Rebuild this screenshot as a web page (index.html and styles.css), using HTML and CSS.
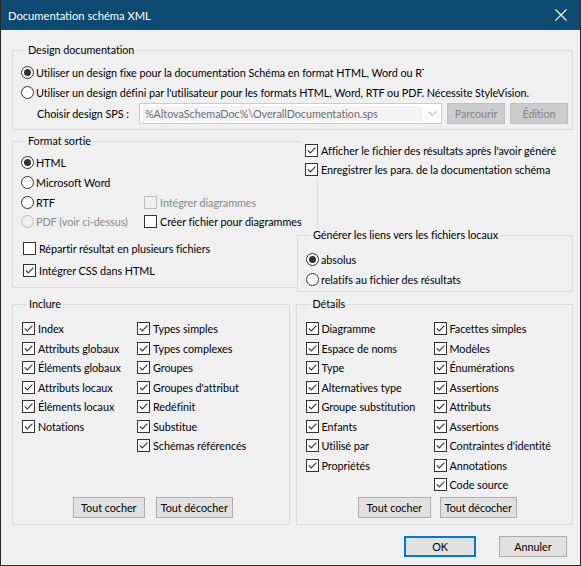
FILE: index.html
```html
<!DOCTYPE html>
<html lang="fr">
<head>
<meta charset="utf-8">
<title>Documentation schéma XML</title>
<link rel="stylesheet" href="styles.css">
</head>
<body>
<div class="window">
  <div class="titlebar">
    <span class="title">Documentation schéma XML</span>
    <svg class="close" width="12" height="12" viewBox="0 0 12 12"><path d="M0.5 0.5 L11.5 11.5 M11.5 0.5 L0.5 11.5" stroke="#fff" stroke-width="1.1" fill="none"/></svg>
  </div>
  <div class="content">
    <fieldset class="group g-design">
      <legend>Design documentation</legend>
      <div class="opt clip"><span class="rb on"></span><span class="lbl">Utiliser un design fixe pour la documentation Schéma en format HTML, Word ou RTF</span></div>
      <div class="opt"><span class="rb"></span><span class="lbl">Utiliser un design défini par l'utilisateur pour les formats HTML, Word, RTF ou PDF. Nécessite StyleVision.</span></div>
      <div class="spsrow">
        <span class="spslabel">Choisir design SPS :</span>
        <div class="combo"><span class="val">%AltovaSchemaDoc%\OverallDocumentation.sps</span><svg class="arrow" width="9" height="5" viewBox="0 0 9 5"><path d="M0.5 0.5 L4.5 4.5 L8.5 0.5" stroke="#a8a8a8" fill="none"/></svg></div>
        <span class="btn disabled b-parc">Parcourir</span>
        <span class="btn disabled b-edit">Édition</span>
      </div>
    </fieldset>

    <div class="middle">
      <fieldset class="group g-format">
        <legend>Format sortie</legend>
        <div class="frow r1"><span class="c1"><span class="rb on"></span>HTML</span></div>
        <div class="frow r2"><span class="c1"><span class="rb"></span>Microsoft Word</span></div>
        <div class="frow r3"><span class="c1"><span class="rb"></span>RTF</span><span class="c2 dis"><span class="cb"></span>Intégrer diagrammes</span></div>
        <div class="frow r4"><span class="c1 dis"><span class="rb"></span>PDF (voir ci-dessus)</span><span class="c2"><span class="cb"></span>Créer fichier pour diagrammes</span></div>
        <div class="frow r5 indent"><span class="cb"></span>Répartir résultat en plusieurs fichiers</div>
        <div class="frow r6 indent"><span class="cb"><svg width="11" height="11" viewBox="0 0 11 11"><path d="M1.8 5.3 L4.3 7.9 L9.4 2.6" stroke="#333" stroke-width="1.1" fill="none"/></svg></span>Intégrer CSS dans HTML</div>
      </fieldset>

      <div class="rightcol">
        <div class="topchecks">
          <div class="opt r19"><span class="cb"><svg width="11" height="11" viewBox="0 0 11 11"><path d="M1.8 5.3 L4.3 7.9 L9.4 2.6" stroke="#333" stroke-width="1.1" fill="none"/></svg></span>Afficher le fichier des résultats après l'avoir généré</div>
          <div class="opt r19"><span class="cb"><svg width="11" height="11" viewBox="0 0 11 11"><path d="M1.8 5.3 L4.3 7.9 L9.4 2.6" stroke="#333" stroke-width="1.1" fill="none"/></svg></span>Enregistrer les para. de la documentation schéma</div>
        </div>
        <div class="genwrap">
          <fieldset class="group g-gen">
            <legend>Générer les liens vers les fichiers locaux</legend>
            <div class="opt"><span class="rb on"></span>absolus</div>
            <div class="opt"><span class="rb"></span>relatifs au fichier des résultats</div>
          </fieldset>
        </div>
      </div>
    </div>

    <div class="lower">
      <fieldset class="group g-incl">
        <legend>Inclure</legend>
        <div class="checks">
          <div class="col col-a">
            <div class="crow"><span class="cb"><svg width="11" height="11" viewBox="0 0 11 11"><path d="M1.8 5.3 L4.3 7.9 L9.4 2.6" stroke="#333" stroke-width="1.1" fill="none"/></svg></span>Index</div>
            <div class="crow"><span class="cb"><svg width="11" height="11" viewBox="0 0 11 11"><path d="M1.8 5.3 L4.3 7.9 L9.4 2.6" stroke="#333" stroke-width="1.1" fill="none"/></svg></span>Attributs globaux</div>
            <div class="crow"><span class="cb"><svg width="11" height="11" viewBox="0 0 11 11"><path d="M1.8 5.3 L4.3 7.9 L9.4 2.6" stroke="#333" stroke-width="1.1" fill="none"/></svg></span>Éléments globaux</div>
            <div class="crow"><span class="cb"><svg width="11" height="11" viewBox="0 0 11 11"><path d="M1.8 5.3 L4.3 7.9 L9.4 2.6" stroke="#333" stroke-width="1.1" fill="none"/></svg></span>Attributs locaux</div>
            <div class="crow"><span class="cb"><svg width="11" height="11" viewBox="0 0 11 11"><path d="M1.8 5.3 L4.3 7.9 L9.4 2.6" stroke="#333" stroke-width="1.1" fill="none"/></svg></span>Éléments locaux</div>
            <div class="crow"><span class="cb"><svg width="11" height="11" viewBox="0 0 11 11"><path d="M1.8 5.3 L4.3 7.9 L9.4 2.6" stroke="#333" stroke-width="1.1" fill="none"/></svg></span>Notations</div>
          </div>
          <div class="col">
            <div class="crow"><span class="cb"><svg width="11" height="11" viewBox="0 0 11 11"><path d="M1.8 5.3 L4.3 7.9 L9.4 2.6" stroke="#333" stroke-width="1.1" fill="none"/></svg></span>Types simples</div>
            <div class="crow"><span class="cb"><svg width="11" height="11" viewBox="0 0 11 11"><path d="M1.8 5.3 L4.3 7.9 L9.4 2.6" stroke="#333" stroke-width="1.1" fill="none"/></svg></span>Types complexes</div>
            <div class="crow"><span class="cb"><svg width="11" height="11" viewBox="0 0 11 11"><path d="M1.8 5.3 L4.3 7.9 L9.4 2.6" stroke="#333" stroke-width="1.1" fill="none"/></svg></span>Groupes</div>
            <div class="crow"><span class="cb"><svg width="11" height="11" viewBox="0 0 11 11"><path d="M1.8 5.3 L4.3 7.9 L9.4 2.6" stroke="#333" stroke-width="1.1" fill="none"/></svg></span>Groupes d'attribut</div>
            <div class="crow"><span class="cb"><svg width="11" height="11" viewBox="0 0 11 11"><path d="M1.8 5.3 L4.3 7.9 L9.4 2.6" stroke="#333" stroke-width="1.1" fill="none"/></svg></span>Redéfinit</div>
            <div class="crow"><span class="cb"><svg width="11" height="11" viewBox="0 0 11 11"><path d="M1.8 5.3 L4.3 7.9 L9.4 2.6" stroke="#333" stroke-width="1.1" fill="none"/></svg></span>Substitue</div>
            <div class="crow"><span class="cb"><svg width="11" height="11" viewBox="0 0 11 11"><path d="M1.8 5.3 L4.3 7.9 L9.4 2.6" stroke="#333" stroke-width="1.1" fill="none"/></svg></span>Schémas référencés</div>
          </div>
        </div>
        <div class="btnrow btnrow-a">
          <span class="btn w72">Tout cocher</span>
          <span class="btn w77">Tout décocher</span>
        </div>
      </fieldset>

      <fieldset class="group g-det">
        <legend>Détails</legend>
        <div class="checks">
          <div class="col col-b">
            <div class="crow"><span class="cb"><svg width="11" height="11" viewBox="0 0 11 11"><path d="M1.8 5.3 L4.3 7.9 L9.4 2.6" stroke="#333" stroke-width="1.1" fill="none"/></svg></span>Diagramme</div>
            <div class="crow"><span class="cb"><svg width="11" height="11" viewBox="0 0 11 11"><path d="M1.8 5.3 L4.3 7.9 L9.4 2.6" stroke="#333" stroke-width="1.1" fill="none"/></svg></span>Espace de noms</div>
            <div class="crow"><span class="cb"><svg width="11" height="11" viewBox="0 0 11 11"><path d="M1.8 5.3 L4.3 7.9 L9.4 2.6" stroke="#333" stroke-width="1.1" fill="none"/></svg></span>Type</div>
            <div class="crow"><span class="cb"><svg width="11" height="11" viewBox="0 0 11 11"><path d="M1.8 5.3 L4.3 7.9 L9.4 2.6" stroke="#333" stroke-width="1.1" fill="none"/></svg></span>Alternatives type</div>
            <div class="crow"><span class="cb"><svg width="11" height="11" viewBox="0 0 11 11"><path d="M1.8 5.3 L4.3 7.9 L9.4 2.6" stroke="#333" stroke-width="1.1" fill="none"/></svg></span>Groupe substitution</div>
            <div class="crow"><span class="cb"><svg width="11" height="11" viewBox="0 0 11 11"><path d="M1.8 5.3 L4.3 7.9 L9.4 2.6" stroke="#333" stroke-width="1.1" fill="none"/></svg></span>Enfants</div>
            <div class="crow"><span class="cb"><svg width="11" height="11" viewBox="0 0 11 11"><path d="M1.8 5.3 L4.3 7.9 L9.4 2.6" stroke="#333" stroke-width="1.1" fill="none"/></svg></span>Utilisé par</div>
            <div class="crow"><span class="cb"><svg width="11" height="11" viewBox="0 0 11 11"><path d="M1.8 5.3 L4.3 7.9 L9.4 2.6" stroke="#333" stroke-width="1.1" fill="none"/></svg></span>Propriétés</div>
          </div>
          <div class="col">
            <div class="crow"><span class="cb"><svg width="11" height="11" viewBox="0 0 11 11"><path d="M1.8 5.3 L4.3 7.9 L9.4 2.6" stroke="#333" stroke-width="1.1" fill="none"/></svg></span>Facettes simples</div>
            <div class="crow"><span class="cb"><svg width="11" height="11" viewBox="0 0 11 11"><path d="M1.8 5.3 L4.3 7.9 L9.4 2.6" stroke="#333" stroke-width="1.1" fill="none"/></svg></span>Modèles</div>
            <div class="crow"><span class="cb"><svg width="11" height="11" viewBox="0 0 11 11"><path d="M1.8 5.3 L4.3 7.9 L9.4 2.6" stroke="#333" stroke-width="1.1" fill="none"/></svg></span>Énumérations</div>
            <div class="crow"><span class="cb"><svg width="11" height="11" viewBox="0 0 11 11"><path d="M1.8 5.3 L4.3 7.9 L9.4 2.6" stroke="#333" stroke-width="1.1" fill="none"/></svg></span>Assertions</div>
            <div class="crow"><span class="cb"><svg width="11" height="11" viewBox="0 0 11 11"><path d="M1.8 5.3 L4.3 7.9 L9.4 2.6" stroke="#333" stroke-width="1.1" fill="none"/></svg></span>Attributs</div>
            <div class="crow"><span class="cb"><svg width="11" height="11" viewBox="0 0 11 11"><path d="M1.8 5.3 L4.3 7.9 L9.4 2.6" stroke="#333" stroke-width="1.1" fill="none"/></svg></span>Assertions</div>
            <div class="crow"><span class="cb"><svg width="11" height="11" viewBox="0 0 11 11"><path d="M1.8 5.3 L4.3 7.9 L9.4 2.6" stroke="#333" stroke-width="1.1" fill="none"/></svg></span>Contraintes d'identité</div>
            <div class="crow"><span class="cb"><svg width="11" height="11" viewBox="0 0 11 11"><path d="M1.8 5.3 L4.3 7.9 L9.4 2.6" stroke="#333" stroke-width="1.1" fill="none"/></svg></span>Annotations</div>
            <div class="crow"><span class="cb"><svg width="11" height="11" viewBox="0 0 11 11"><path d="M1.8 5.3 L4.3 7.9 L9.4 2.6" stroke="#333" stroke-width="1.1" fill="none"/></svg></span>Code source</div>
          </div>
        </div>
        <div class="btnrow btnrow-b">
          <span class="btn w73">Tout cocher</span>
          <span class="btn w77">Tout décocher</span>
        </div>
      </fieldset>
    </div>

    <div class="footer">
      <span class="btn ok">OK</span>
      <span class="btn cancel">Annuler</span>
    </div>
  </div>
</div>
</body>
</html>
```

FILE: styles.css
```css
* { box-sizing: border-box; }
html, body { margin: 0; padding: 0; }
body {
  width: 581px;
  height: 566px;
  background: #f0f0f0;
  font-family: Lato, "Liberation Sans", sans-serif;
  font-size: 10.8px;
  letter-spacing: -0.04px;
  color: #000;
  overflow: hidden;
}
.window {
  width: 581px;
  height: 566px;
  border: 1px solid #2b2b2b;
  border-top: 0;
  background: #f0f0f0;
  display: flex;
  flex-direction: column;
}
.titlebar {
  height: 30px;
  flex: none;
  background: #0c4a71;
  color: #fff;
  display: flex;
  align-items: center;
  justify-content: space-between;
  padding: 0 13px 0 7px;
}
.title { font-size: 11.2px; letter-spacing: 0; }
.close { display: block; }

.content {
  padding: 0 7px 0 11px;
  display: flex;
  flex-direction: column;
}

.group {
  border: 1px solid #dcdcdc;
  margin: 0;
  padding: 0;
  min-width: 0;
}
.group legend {
  padding: 0 2px;
  margin-left: 5px;
  line-height: 14px;
}

/* generic option rows */
.opt { display: flex; align-items: center; height: 20px; white-space: nowrap; }
.opt.r19 { height: 19px; }
.clip .lbl { display: block; width: 388px; overflow: hidden; }
.rb {
  width: 13px; height: 13px; flex: none;
  border: 1px solid #333;
  border-radius: 50%;
  background: #fff;
  margin-right: 2px;
  display: grid;
  place-items: center;
}
.rb.on::after {
  content: "";
  width: 7px; height: 7px;
  border-radius: 50%;
  background: #333;
}
.cb {
  width: 13px; height: 13px; flex: none;
  border: 1px solid #333;
  background: #fff;
  margin-right: 3px;
  display: flex;
}
.cb svg { display: block; }
.dis { color: #8a8a8a; }
.dis .rb, .dis .cb { border-color: #bcbcbc; background: #f0f0f0; }

/* design group */
.g-design { margin-top: 13px; padding: 5px 5px 5px 8px; }
.spsrow { display: flex; align-items: center; height: 21px; margin-top: 1px; white-space: nowrap; }
.spslabel { width: 118px; padding-left: 16px; flex: none; }
.combo {
  width: 303px; height: 21px; flex: none;
  border: 1px solid #cccccc;
  background: #fff;
  display: flex; align-items: center;
  padding: 2px;
}
.combo .val {
  width: 281px; height: 15px;
  background: #f4f4f4;
  color: #6d6d6d;
  padding-left: 3px;
  line-height: 15px;
  white-space: nowrap;
  overflow: hidden;
}
.combo .arrow { margin-left: 5px; display: block; }

.btn {
  height: 21px;
  display: flex; align-items: center; justify-content: center;
  border: 1px solid #adadad;
  background: #e1e1e1;
  white-space: nowrap;
  flex: none;
}
.btn.disabled { background: #cccccc; border-color: #bfbfbf; color: #838383; }
.b-parc { width: 58px; margin-left: 5px; }
.b-edit { width: 58px; margin-left: 5px; }

/* middle */
.middle {
  display: grid;
  grid-template-columns: 285px 21px 1fr;
  margin-top: 4px;
}
.g-format {
  grid-column: 1 / 3;
  grid-row: 1;
  align-self: start;
  padding: 4px 0 7px 8px;
}
.frow { display: flex; align-items: center; height: 20px; white-space: nowrap; }
.frow.r2 { height: 21px; }
.frow.r3 { height: 19px; }
.frow.r4 { height: 19px; }
.frow.r5 { margin-top: 7px; }
.frow.r6 { margin-top: 2px; }
.frow.indent { padding-left: 2px; }
.c1 { width: 123px; display: flex; align-items: center; flex: none; }
.c2 { display: flex; align-items: center; }

.rightcol {
  grid-column: 2 / 4;
  grid-row: 1;
  align-self: start;
  display: flex;
  flex-direction: column;
  position: relative;
  z-index: 1;
}
.topchecks {
  margin-left: 4px;
  padding: 7px 0 0 4px;
  background: #f0f0f0;
}
.genwrap { margin-top: 49px; background: #f0f0f0; }
.g-gen { padding: 7px 0 2px 8px; }

/* lower */
.lower {
  display: grid;
  grid-template-columns: 1fr 1fr;
  column-gap: 6px;
  margin-top: 5px;
}
.g-incl, .g-det {
  display: flex;
  flex-direction: column;
  padding: 8px 0 6px 9px;
}
.checks { display: flex; min-height: 178px; }
.col { display: flex; flex-direction: column; }
.col-a { width: 115px; flex: none; }
.col-b { width: 128px; flex: none; }
.crow { display: flex; align-items: center; height: 19.5px; white-space: nowrap; }
.btnrow { display: flex; justify-content: center; margin-top: auto; padding-right: 9px; }
.btnrow-a { gap: 11px; padding-left: 4px; }
.btnrow-b { gap: 9px; padding-left: 6px; }
.w72 { width: 72px; }
.w73 { width: 73px; }
.w77 { width: 77px; }

.footer {
  display: flex;
  justify-content: flex-end;
  gap: 23px;
  margin-top: 11px;
  padding-right: 6px;
}
.ok { width: 72px; border: 2px solid #0078d7; }
.cancel { width: 68px; }
```
